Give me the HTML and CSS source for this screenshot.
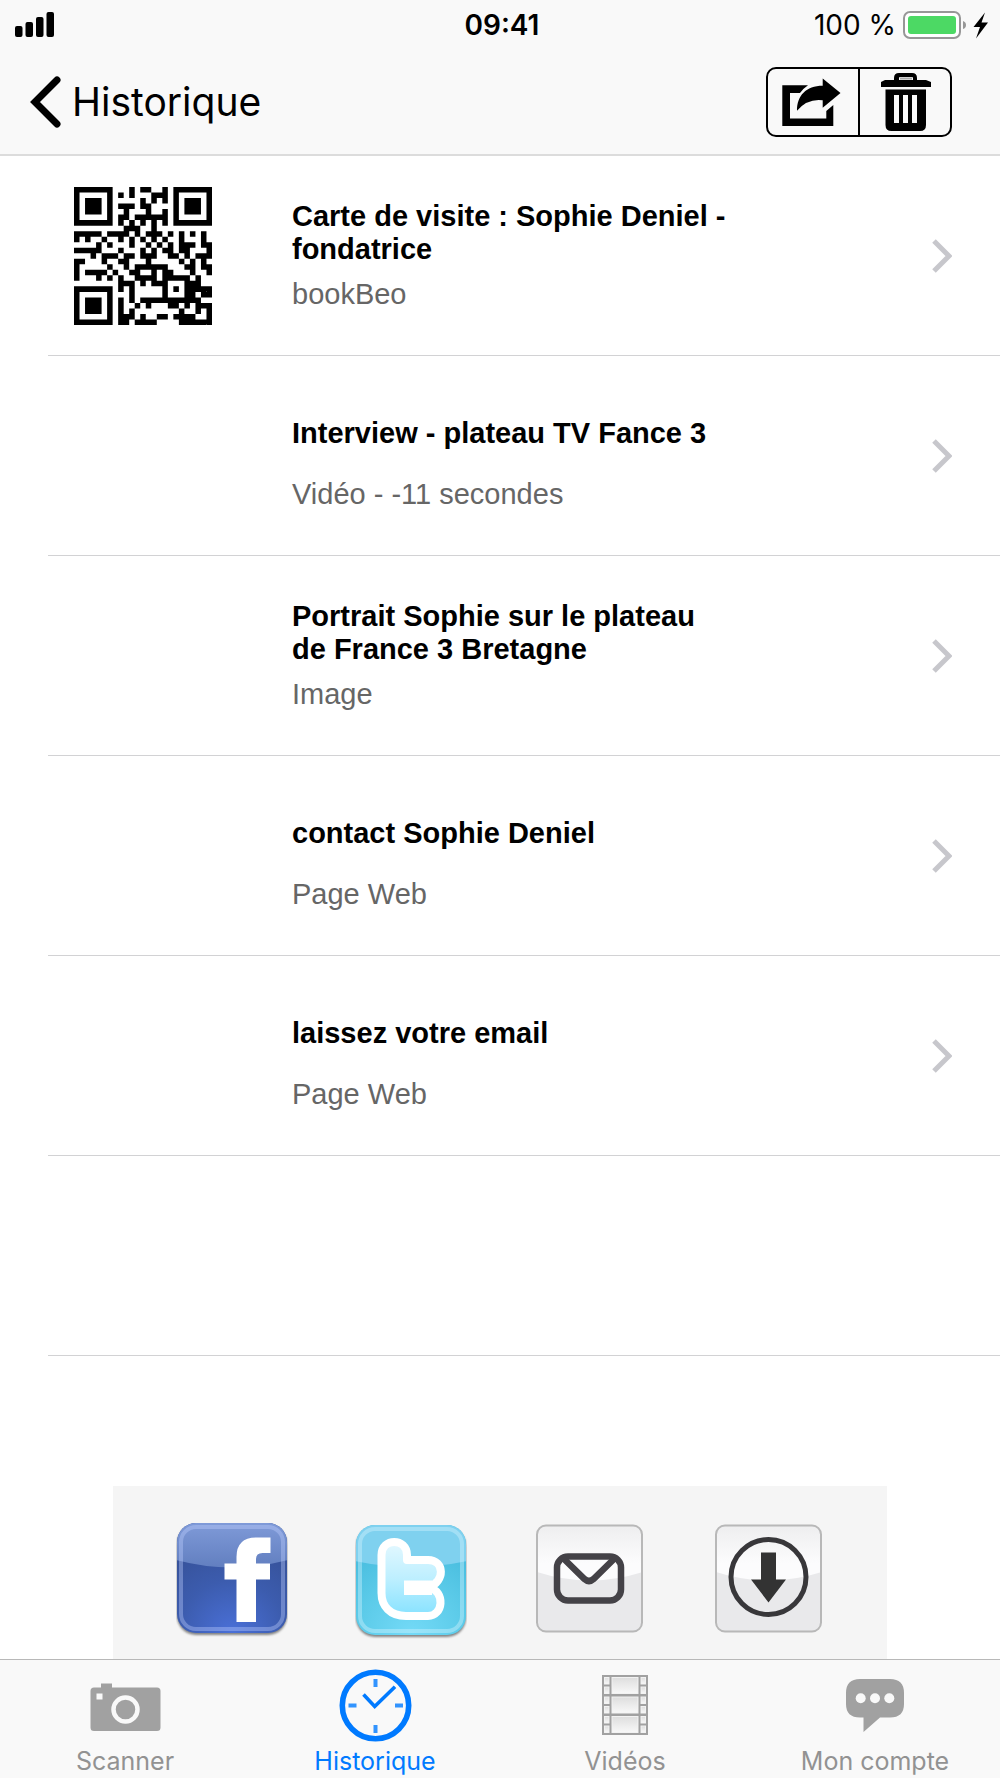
FILE: index.html
```html
<!DOCTYPE html>
<html lang="fr">
<head>
<meta charset="utf-8">
<meta name="viewport" content="width=device-width, initial-scale=1">
<title>Historique</title>
<link rel="stylesheet" href="styles.css">
</head>
<body>
<header class="header">
  <div class="status">
    <svg class="signal" width="40" height="26" viewBox="0 0 40 26" aria-hidden="true">
      <rect x="0" y="14" width="7.500" height="11" rx="2"/><rect x="10.500" y="10" width="7.500" height="15" rx="2"/><rect x="21" y="5" width="7.500" height="20" rx="2"/><rect x="31.500" y="0" width="7.500" height="25" rx="2"/>
    </svg>
    <time class="clock">09:41</time>
    <div class="power">
      <span>100 %</span>
      <svg width="86" height="28" viewBox="0 0 86 28" aria-hidden="true">
        <rect x="1" y="1" width="56" height="26" rx="6" fill="#fff" stroke="#979797" stroke-width="2"/>
        <rect x="5" y="5" width="48" height="18" rx="3" fill="#4cd964"/>
        <path d="M60 10q3 1 3 4t-3 4z" fill="#979797"/>
        <path d="M82 1.500L70.500 16h6.500l-4 11.500L85 11.500h-6.500z" fill="#000"/>
      </svg>
    </div>
  </div>
  <nav class="nav">
    <a class="back" href="#retour">
      <svg width="32" height="52" viewBox="0 0 32 52" aria-hidden="true"><path d="M27 4L5 26l22 22" fill="none" stroke="#000" stroke-width="7" stroke-linecap="round"/></svg>
      <span>Historique</span>
    </a>
    <div class="segments">
      <button class="segment" type="button" aria-label="Partager">
        <svg width="90" height="66" viewBox="0 0 90 66" aria-hidden="true">
          <path d="M14.300 16.300H40q-4.500 3-8 7.700H22v25.500h36.300V42l7-6v21h-51z"/>
          <path d="M54.700 9.500L72.500 24 54.700 38.800v-7.500q-15-2-25.700 10.400c0-15 9-25 25.700-25z"/>
        </svg>
      </button>
      <button class="segment" type="button" aria-label="Supprimer">
        <svg width="90" height="66" viewBox="0 0 90 66" aria-hidden="true">
          <path fill-rule="evenodd" d="M21 18v-5l4-2h9V9q0-5 5-5h13q5 0 5 5v2h9l5 2v5zM39 11h14V9q0-1-1-1H40q-1 0-1 1z"/>
          <path fill-rule="evenodd" d="M25.500 20.500h40.500V56q0 6-6 6H31.500q-6 0-6-6zM34 26v28h5V26zM43 26v28h5V26zM52 26v28h5V26z"/>
          <path d="M40 8.500h12v2H40z" fill="#aaa"/>
        </svg>
      </button>
    </div>
  </nav>
</header>

<main class="main">
  <ul class="list">
    <li class="row"><a class="item" href="#carte">
      <span class="thumb"><svg class="qr" data-link="http://bookbeo.com/sophie" viewBox="0 0 25 25" role="img" aria-label="QR code"></svg></span>
      <span class="text"><strong class="title">Carte de visite : Sophie Deniel - fondatrice</strong><span class="sub">bookBeo</span></span>
      <svg class="chevron" viewBox="0 0 20 34" aria-hidden="true"><path d="M2 2l15 15L2 32"/></svg>
    </a></li>
    <li class="row"><a class="item" href="#interview">
      <span class="thumb"></span>
      <span class="text"><strong class="title">Interview - plateau TV Fance 3</strong><span class="sub">Vidéo - -11 secondes</span></span>
      <svg class="chevron" viewBox="0 0 20 34" aria-hidden="true"><path d="M2 2l15 15L2 32"/></svg>
    </a></li>
    <li class="row"><a class="item" href="#portrait">
      <span class="thumb"></span>
      <span class="text"><strong class="title">Portrait Sophie sur le plateau de France 3 Bretagne</strong><span class="sub">Image</span></span>
      <svg class="chevron" viewBox="0 0 20 34" aria-hidden="true"><path d="M2 2l15 15L2 32"/></svg>
    </a></li>
    <li class="row"><a class="item" href="#contact">
      <span class="thumb"></span>
      <span class="text"><strong class="title">contact Sophie Deniel</strong><span class="sub">Page Web</span></span>
      <svg class="chevron" viewBox="0 0 20 34" aria-hidden="true"><path d="M2 2l15 15L2 32"/></svg>
    </a></li>
    <li class="row"><a class="item" href="#email">
      <span class="thumb"></span>
      <span class="text"><strong class="title">laissez votre email</strong><span class="sub">Page Web</span></span>
      <svg class="chevron" viewBox="0 0 20 34" aria-hidden="true"><path d="M2 2l15 15L2 32"/></svg>
    </a></li>
    <li class="row"></li>
  </ul>

  <div class="share">
    <button class="share-button" type="button" aria-label="Facebook">
      <svg width="112" height="116" viewBox="0 0 112 116" aria-hidden="true">
        <defs>
          <radialGradient id="fb" cx=".5" cy="1" r=".8"><stop offset="0" stop-color="#4a70d8"/><stop offset=".6" stop-color="#3c5cae"/><stop offset="1" stop-color="#37539c"/></radialGradient>
          <linearGradient id="fbGloss" x2="0" y2="1"><stop offset="0" stop-color="#7f9ad8"/><stop offset="1" stop-color="#627fc0"/></linearGradient>
          <filter id="soft" x="-10%" y="-10%" width="120%" height="120%"><feGaussianBlur stdDeviation="1.200"/></filter>
          <clipPath id="fbClip"><rect x="1" width="110" height="110" rx="19"/></clipPath>
        </defs>
        <rect x="1" y="2" width="110" height="110" rx="19" fill="#555" opacity=".7" filter="url(#soft)"/>
        <rect x="1" width="110" height="110" rx="19" fill="url(#fb)"/>
        <g clip-path="url(#fbClip)"><path d="M0 0h112v37Q56 52 0 37z" fill="url(#fbGloss)"/></g>
        <rect x="5" y="4" width="102" height="102" rx="15" fill="none" stroke="#c0d0ff" stroke-opacity=".38" stroke-width="4"/>
        <path d="M60.500 99V56.500h-12v-16h12V34q0-19.500 20-19.500h14V30h-8q-6.500 0-6.500 6v4.500h14v16H80V99z" fill="#fff"/>
      </svg>
    </button>
    <button class="share-button" type="button" aria-label="Twitter">
      <svg width="112" height="116" viewBox="0 0 112 116" aria-hidden="true">
        <defs>
          <radialGradient id="tw" cx=".5" cy="1" r=".8"><stop offset="0" stop-color="#74daf7"/><stop offset=".6" stop-color="#5ccbe9"/><stop offset="1" stop-color="#4bbfe0"/></radialGradient>
          <linearGradient id="bird" x2="0" y2="1"><stop offset="0" stop-color="#e4f8ff"/><stop offset=".5" stop-color="#bdefff"/><stop offset="1" stop-color="#86e2ff"/></linearGradient>
          <clipPath id="twClip"><rect x="1" y="2" width="110" height="110" rx="19"/></clipPath>
        </defs>
        <rect x="1" y="4" width="110" height="110" rx="19" fill="#555" opacity=".7" filter="url(#soft)"/>
        <rect x="1" y="2" width="110" height="110" rx="19" fill="url(#tw)"/>
        <g clip-path="url(#twClip)"><path d="M0 2h112v36Q56 50 0 38z" fill="#7fd1ef"/></g>
        <rect x="5" y="6" width="102" height="102" rx="15" fill="none" stroke="#d8f6ff" stroke-opacity=".4" stroke-width="4"/>
        <path d="M26.500 32C26.500 14.500 52 14.500 52 32v5h21c17 0 17 22 1 27 17 5 14 29-1 29H51C35 93 26.500 83 26.500 70z" fill="url(#bird)" stroke="#fff" stroke-width="8" stroke-linejoin="round"/>
        <path d="M49 57.500h28v14.500H49z" fill="#fff"/>
      </svg>
    </button>
    <button class="share-button" type="button" aria-label="E-mail">
      <svg width="112" height="116" viewBox="0 0 112 116" aria-hidden="true">
        <defs>
          <linearGradient id="gloss" x2="0" y2="1"><stop offset="0" stop-color="#ededee"/><stop offset=".7" stop-color="#fcfcfd"/></linearGradient>
          <clipPath id="greyClip"><rect x="3" y="2.500" width="105" height="106" rx="9"/></clipPath>
        </defs>
        <rect x="3" y="2.500" width="105" height="106" rx="9" fill="#e9e9eb"/>
        <g clip-path="url(#greyClip)"><path d="M0 0h112v48Q56 67 0 48z" fill="url(#gloss)"/></g>
        <rect x="3" y="2.500" width="105" height="106" rx="9" fill="none" stroke="#b8b8b8" stroke-width="2"/>
        <rect x="23" y="33.500" width="64" height="44" rx="11" fill="none" stroke="#444247" stroke-width="6.500"/>
        <path d="M29 35l21.500 21q4.500 4 9 0L81 35" fill="none" stroke="#444247" stroke-width="6.500"/>
      </svg>
    </button>
    <button class="share-button" type="button" aria-label="Télécharger">
      <svg width="112" height="116" viewBox="0 0 112 116" aria-hidden="true">
        <rect x="3" y="2.500" width="105" height="106" rx="9" fill="#e9e9eb"/>
        <g clip-path="url(#greyClip)"><path d="M0 0h112v48Q56 67 0 48z" fill="url(#gloss)"/></g>
        <rect x="3" y="2.500" width="105" height="106" rx="9" fill="none" stroke="#b8b8b8" stroke-width="2"/>
        <circle cx="55.500" cy="54" r="37.500" fill="none" stroke="#38373a" stroke-width="5"/>
        <path d="M48 29.500h15v27h10L55.500 79.500 38 56.500h10z" fill="#333"/>
      </svg>
    </button>
  </div>
</main>

<nav class="tabs">
  <a class="tab" href="#scanner">
    <svg width="80" height="76" viewBox="0 0 80 76" aria-hidden="true">
      <path fill="#a1a1a1" d="M9 19.500h7V15.500h11v4H72q3.500 0 3.500 3.500v36.500q0 3.500-3.500 3.500H9q-3.500 0-3.500-3.500V23q0-3.500 3.500-3.500z"/>
      <rect x="11.500" y="25.500" width="6" height="6" fill="#f9f9f9"/>
      <circle cx="40.500" cy="41.500" r="12" fill="none" stroke="#f9f9f9" stroke-width="4.500"/>
    </svg>
    <span>Scanner</span>
  </a>
  <a class="tab active" href="#historique" aria-current="page">
    <svg width="80" height="76" viewBox="0 0 80 76" fill="none" stroke="#007aff" aria-hidden="true">
      <circle cx="40.500" cy="37.500" r="33.200" stroke-width="5.600"/>
      <path d="M40.500 11v8M40.500 57v8M13.500 37.500h8M60 37.500h8" stroke-width="4" stroke-opacity=".8"/>
      <path d="M28.500 26.500L39.700 38.500 60 18.700" stroke-width="3.600"/>
    </svg>
    <span>Historique</span>
  </a>
  <a class="tab" href="#videos">
    <svg width="80" height="76" viewBox="0 0 80 76" aria-hidden="true">
      <defs>
        <linearGradient id="frame" x2="0" y2="1"><stop offset="0" stop-color="#dedede"/><stop offset="1" stop-color="#f8f8f8"/></linearGradient>
      </defs>
      <rect x="17" y="7" width="46" height="60" fill="#a1a1a1"/>
      <g fill="url(#frame)" stroke="#f2f2f2" stroke-width="1">
        <rect x="27" y="9.500" width="26" height="16"/><rect x="27" y="29" width="26" height="16"/><rect x="27" y="48.500" width="26" height="16"/>
        <rect x="19.500" y="9.500" width="4.500" height="6.500"/><rect x="19.500" y="19" width="4.500" height="6.500"/><rect x="19.500" y="29" width="4.500" height="6.500"/><rect x="19.500" y="38.500" width="4.500" height="6.500"/><rect x="19.500" y="48.500" width="4.500" height="6.500"/><rect x="19.500" y="58" width="4.500" height="6.500"/>
        <rect x="56" y="9.500" width="4.500" height="6.500"/><rect x="56" y="19" width="4.500" height="6.500"/><rect x="56" y="29" width="4.500" height="6.500"/><rect x="56" y="38.500" width="4.500" height="6.500"/><rect x="56" y="48.500" width="4.500" height="6.500"/><rect x="56" y="58" width="4.500" height="6.500"/>
      </g>
    </svg>
    <span>Vidéos</span>
  </a>
  <a class="tab" href="#compte">
    <svg width="80" height="76" viewBox="0 0 80 76" aria-hidden="true">
      <path fill="#a1a1a1" d="M25 11h30q14 0 14 14v11q0 13.500-14 13.500H45L28.500 64V49.500H25q-14 0-14-13.500V25q0-14 14-14z"/>
      <g fill="#f9f9f9"><circle cx="25.700" cy="30.300" r="5"/><circle cx="40" cy="30.300" r="5"/><circle cx="54.300" cy="30.300" r="5"/></g>
    </svg>
    <span>Mon compte</span>
  </a>
</nav>
<script src="qr.js"></script>
</body>
</html>
```

FILE: styles.css
```css
* {
  box-sizing: border-box;
}

body {
  margin: 0;
  min-height: 100vh;
  display: flex;
  flex-direction: column;
  background: #fff;
  color: #000;
  font-family: Inter, "Liberation Sans", sans-serif;
}

a {
  color: inherit;
  text-decoration: none;
}

button {
  padding: 0;
  border: 0;
  background: none;
}

svg {
  display: block;
}

.header {
  background: #f9f9f9;
  border-bottom: 2px solid #dcdcdc;
}

.status {
  display: grid;
  grid-template-columns: 1fr auto 1fr;
  align-items: center;
  height: 50px;
  padding: 0 11px 0 15px;
  font-size: 28px;
  line-height: 48px;
}

.clock {
  font-weight: 600;
}

.power {
  display: flex;
  justify-content: flex-end;
  align-items: center;
  gap: 7px;
}

.nav {
  display: flex;
  justify-content: space-between;
  align-items: center;
  height: 104px;
  padding: 0 48px 0 30px;
}

.back {
  display: flex;
  align-items: center;
  gap: 10px;
  font-size: 39px;
  line-height: 48px;
}

.segments {
  display: flex;
  border: 2px solid #000;
  border-radius: 10px;
}

.segment + .segment {
  border-left: 2px solid #000;
}

.main {
  flex: 1;
  display: flex;
  flex-direction: column;
}

.list {
  display: grid;
  grid-auto-rows: 200px;
  margin: 0;
  padding: 0 0 0 48px;
  list-style: none;
}

.row {
  border-bottom: 1px solid #d2d2d4;
}

.item {
  display: flex;
  align-items: center;
  height: 100%;
  padding: 0 48px 0 26px;
  font-family: "Liberation Sans", Arial, sans-serif;
  font-size: 29px;
}

.thumb {
  flex: none;
  width: 218px;
}

.qr {
  width: 138px;
  height: 138px;
}

.text {
  flex: 0 1 438px;
  display: flex;
  flex-direction: column;
  gap: 12px;
}

.title {
  display: flex;
  align-items: center;
  min-height: 66px;
  line-height: 33px;
}

.sub {
  color: #666;
  line-height: 33px;
}

.chevron {
  width: 20px;
  height: 34px;
  margin-left: auto;
  fill: none;
  stroke: #c7c7cc;
  stroke-width: 5px;
}

.share {
  display: flex;
  justify-content: center;
  gap: 67px;
  width: 100%;
  max-width: 774px;
  margin: auto auto 0;
  padding: 37px 0 20px;
  background: #f5f5f5;
}

.tabs {
  display: grid;
  grid-template-columns: repeat(4, 1fr);
  padding: 8px 0 0;
  background: #f9f9f9;
  border-top: 1px solid #b8b8b8;
  color: #929292;
  font-size: 25px;
  line-height: 34px;
}

.tab {
  display: flex;
  flex-direction: column;
  align-items: center;
}

.active {
  color: #007aff;
}
```

FILE: qr.js
```js
// QR code, version 2, error correction L, mask 2: draws the link of each .qr element.
const SIZE = 25;
const DATA_BYTES = 34;
const ECC_BYTES = 10;
const FORMAT = "111110110101010";

function multiply(a, b) {
  let product = 0;
  for (let i = 7; i >= 0; i--) {
    product = (product << 1) ^ ((product >> 7) * 0x11d);
    product ^= ((b >> i) & 1) * a;
  }
  return product;
}

function errorCorrection(data) {
  const divisor = new Array(ECC_BYTES).fill(0);
  divisor[ECC_BYTES - 1] = 1;
  let root = 1;
  for (let i = 0; i < ECC_BYTES; i++) {
    for (let j = 0; j < ECC_BYTES; j++) {
      divisor[j] = multiply(divisor[j], root);
      if (j + 1 < ECC_BYTES) divisor[j] ^= divisor[j + 1];
    }
    root = multiply(root, 2);
  }
  const rest = new Array(ECC_BYTES).fill(0);
  for (const byte of data) {
    const factor = byte ^ rest.shift();
    rest.push(0);
    divisor.forEach((d, i) => { rest[i] ^= multiply(d, factor); });
  }
  return rest;
}

function encode(text) {
  const toBits = (n) => n.toString(2).padStart(8, "0");
  let bits = "0100" + toBits(text.length);
  for (const ch of text) bits += toBits(ch.charCodeAt(0));
  bits += "0000";
  const bytes = bits.match(/.{8}/g).map((b) => parseInt(b, 2));
  for (let pad = 0xec; bytes.length < DATA_BYTES; pad ^= 0xec ^ 0x11) bytes.push(pad);
  return bytes.concat(errorCorrection(bytes)).map(toBits).join("");
}

function buildMatrix(text) {
  const grid = Array.from({ length: SIZE }, () => new Array(SIZE).fill(null));
  const square = (row, col, reach, isDark) => {
    for (let r = -reach; r <= reach; r++) {
      for (let c = -reach; c <= reach; c++) {
        if (grid[row + r] && grid[row + r][col + c] !== undefined) {
          grid[row + r][col + c] = isDark(Math.max(Math.abs(r), Math.abs(c)));
        }
      }
    }
  };
  for (let i = 0; i < SIZE; i++) grid[6][i] = grid[i][6] = i % 2 === 0;
  const finder = (d) => d !== 2 && d !== 4;
  square(3, 3, 4, finder);
  square(3, SIZE - 4, 4, finder);
  square(SIZE - 4, 3, 4, finder);
  square(18, 18, 2, (d) => d !== 1);

  const first = [[8, 0], [8, 1], [8, 2], [8, 3], [8, 4], [8, 5], [8, 7], [8, 8], [7, 8], [5, 8], [4, 8], [3, 8], [2, 8], [1, 8], [0, 8]];
  first.forEach(([r, c], i) => {
    const dark = FORMAT[i] === "1";
    grid[r][c] = dark;
    if (i < 7) grid[SIZE - 1 - i][8] = dark;
    else grid[8][SIZE - 15 + i] = dark;
  });
  grid[SIZE - 8][8] = true;

  const bits = encode(text);
  let next = 0;
  let up = true;
  for (let right = SIZE - 1; right > 0; right -= 2) {
    if (right === 6) right = 5;
    for (let i = 0; i < SIZE; i++) {
      const row = up ? SIZE - 1 - i : i;
      for (const col of [right, right - 1]) {
        if (grid[row][col] === null) {
          grid[row][col] = (bits[next++] === "1") !== (col % 3 === 0);
        }
      }
    }
    up = !up;
  }
  return grid;
}

document.querySelectorAll(".qr").forEach((svg) => {
  let d = "";
  buildMatrix(svg.dataset.link).forEach((row, y) => {
    row.forEach((dark, x) => { if (dark) d += `M${x} ${y}h1v1h-1z`; });
  });
  const path = document.createElementNS("http://www.w3.org/2000/svg", "path");
  path.setAttribute("d", d);
  svg.append(path);
});
```
